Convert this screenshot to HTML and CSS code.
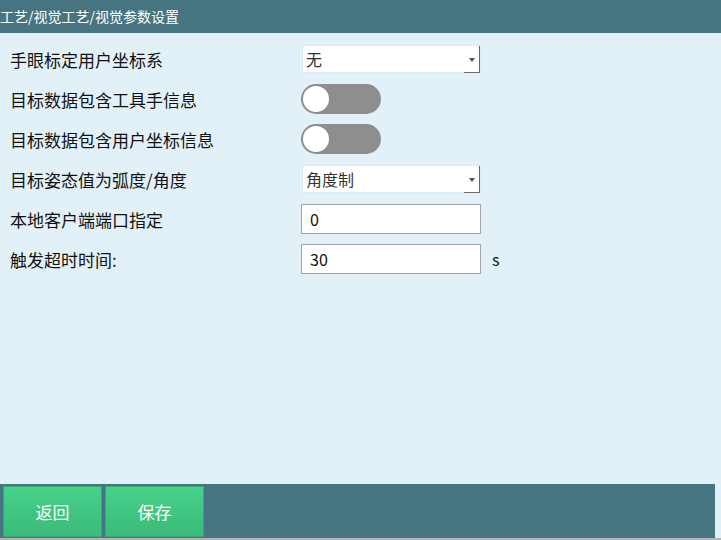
FILE: index.html
```html
<!DOCTYPE html>
<html>
<head>
<meta charset="utf-8">
<link rel="stylesheet" href="styles.css">
</head>
<body>
<div class="page">
  <div class="header">工艺/视觉工艺/视觉参数设置</div>
  <div class="form">
    <div class="row">
      <div class="label">手眼标定用户坐标系</div>
      <div class="select"><span class="val">无</span><span class="arrow"><i></i></span></div>
    </div>
    <div class="row">
      <div class="label">目标数据包含工具手信息</div>
      <div class="toggle"><span class="knob"></span></div>
    </div>
    <div class="row">
      <div class="label">目标数据包含用户坐标信息</div>
      <div class="toggle"><span class="knob"></span></div>
    </div>
    <div class="row">
      <div class="label">目标姿态值为弧度/角度</div>
      <div class="select"><span class="val">角度制</span><span class="arrow"><i></i></span></div>
    </div>
    <div class="row">
      <div class="label">本地客户端端口指定</div>
      <div class="input">0</div>
    </div>
    <div class="row">
      <div class="label">触发超时时间:</div>
      <div class="input">30</div>
      <div class="unit">s</div>
    </div>
  </div>
  <div class="footer-wrap">
    <div class="footer">
      <div class="btn">返回</div>
      <div class="btn">保存</div>
    </div>
  </div>
  <div class="bottom-line"></div>
</div>
</body>
</html>
```

FILE: styles.css
```css
* { box-sizing: border-box; }
html, body { margin: 0; padding: 0; }
body {
  width: 721px;
  height: 540px;
  overflow: hidden;
  background: #e2f1f7;
  font-family: "Microsoft YaHei", "Noto Sans CJK SC", "Liberation Sans", sans-serif;
}
.page {
  width: 721px;
  height: 540px;
  display: flex;
  flex-direction: column;
}
.header {
  height: 33px;
  background: #477481;
  color: #ffffff;
  font-size: 14px;
  line-height: 33px;
  padding-left: 0;
  flex: none;
}
.form {
  flex: 1;
  padding-top: 11px;
  padding-left: 10px;
}
.row {
  display: flex;
  align-items: center;
  height: 30px;
  margin-bottom: 10px;
}
.label {
  width: 291px;
  font-size: 17px;
  color: #111;
  flex: none;
}
.select {
  width: 179px;
  height: 28px;
  background: #fff;
  display: flex;
  align-items: center;
  justify-content: space-between;
  border: 1px solid #d8ecf3;
  margin-left: 1px;
}
.select .val {
  font-size: 16px;
  color: #333;
  padding-left: 3px;
}
.select .arrow {
  width: 16px;
  height: 27px;
  border-right: 1px solid #6a6a6a;
  border-bottom: 1px solid #6a6a6a;
  display: flex;
  align-items: center;
  justify-content: center;
  align-self: flex-start;
}
.select .arrow i {
  width: 0;
  height: 0;
  border-left: 3.5px solid transparent;
  border-right: 3.5px solid transparent;
  border-top: 4px solid #555;
  margin-top: 1px;
}
.toggle {
  width: 80px;
  height: 30px;
  border-radius: 15px;
  background: #8e8e8e;
  position: relative;
}
.toggle .knob {
  position: absolute;
  left: 2px;
  top: 2px;
  width: 26px;
  height: 26px;
  border-radius: 50%;
  background: #fff;
}
.input {
  width: 180px;
  height: 30px;
  background: #fff;
  border: 1px solid #a6a6a6;
  font-size: 16px;
  line-height: 28px;
  padding-left: 8px;
  color: #111;
}
.unit {
  margin-left: 11px;
  font-size: 16px;
  color: #111;
}
.footer-wrap {
  flex: none;
  height: 54px;
  padding-right: 6px;
}
.footer {
  height: 54px;
  background: #477481;
  display: flex;
  gap: 3px;
  padding: 2px 0 1px 3px;
}
.btn {
  width: 99px;
  background: linear-gradient(#46d38a, #3cb978);
  box-shadow: inset 0 0 0 1px #3aa872;
  color: #fff;
  font-size: 17px;
  display: flex;
  align-items: center;
  justify-content: center;
}
.bottom-line {
  flex: none;
  height: 2px;
  background: #b4b4b4;
}
```
